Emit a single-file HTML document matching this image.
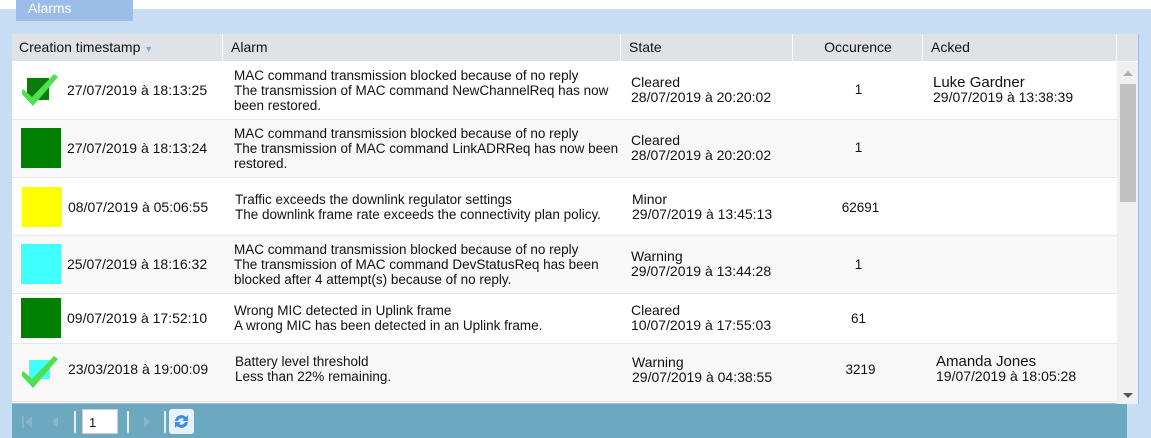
<!DOCTYPE html>
<html><head><meta charset="utf-8"><style>
*{margin:0;padding:0;box-sizing:border-box}
body{width:1151px;height:438px;overflow:hidden;background:#fff;font-family:"Liberation Sans",Tahoma,sans-serif;font-size:13.5px;color:#111;position:relative}
.a{position:absolute}
.panel{left:0;top:9px;width:1151px;height:429px;background:#c6ddf3}
.tab{left:16px;top:0;width:117px;height:21px;background:#9cbde8;color:#fff;font-size:14px;padding:0 0 0 12px;line-height:17px}
.table{left:12px;top:34px;width:1127px;height:370px;background:#fff;border-right:1px solid #9cbde8;border-bottom:1px solid #9cbde8}
.hdr{left:12px;top:34px;width:1126px;height:27px;background:#dfe3e8}
.hc{top:34px;height:27px;line-height:26px;border-left:1px solid #fff;padding-left:8px;font-size:14px}
.row{left:12px;width:1105px;border-bottom:1px solid #e8e8e8}
.t{line-height:13px}
.ts{font-size:14px}
.sq{width:40px;height:40px}
.sb{left:1117px;top:62px;width:21px;height:342px;background:#f0f0f0}
.tool{left:12px;top:404px;width:1115px;height:34px;background:#6da8c1}
</style></head><body>
<div class="a panel"></div>
<div class="a tab">Alarms</div>
<div class="a table"></div>
<div class="a hdr"></div>
<div class="a hc" style="left:12px;border-left:0;padding-left:7px">Creation timestamp <span style="color:#7fa6d6;font-size:9px">&#9660;</span></div>
<div class="a hc" style="left:222px">Alarm</div>
<div class="a hc" style="left:620px">State</div>
<div class="a hc" style="left:792px;width:131px;text-align:center;padding:0">Occurence</div>
<div class="a hc" style="left:922px">Acked</div>
<div class="a hc" style="left:1116px;height:27px"></div>

<div class="a row" style="top:62px;height:58px;background:#fff"></div>
<div class="a row" style="top:120px;height:58px;background:#f8f8f8"></div>
<div class="a row" style="top:178px;height:58px;background:#fff"></div>
<div class="a row" style="top:236px;height:58px;background:#f8f8f8"></div>
<div class="a row" style="top:294px;height:50px;background:#fff"></div>
<div class="a row" style="top:344px;height:58px;background:#f8f8f8"></div>

<!-- row1 -->
<svg class="a" style="left:22px;top:72px" width="40" height="36" viewBox="0 0 40 36"><rect x="5" y="6" width="22" height="22" fill="#0b7d0b"/><path d="M1 17 L10 25 L32 2 L36 5 L11 34 L-1 21 Z" fill="#4fe04f"/></svg>
<div class="a t ts" style="left:67px;top:84px">27/07/2019 à 18:13:25</div>
<div class="a t" style="left:234px;top:68px;line-height:15px">MAC command transmission blocked because of no reply<br>The transmission of MAC command NewChannelReq has now<br>been restored.</div>
<div class="a t ts" style="left:631px;top:75px;line-height:15px">Cleared<br>28/07/2019 à 20:20:02</div>
<div class="a t" style="left:793px;width:131px;text-align:center;top:83px">1</div>
<div class="a t ts" style="left:933px;top:75px;line-height:15px"><span style="font-size:15px">Luke Gardner</span><br>29/07/2019 à 13:38:39</div>
<!-- row2 -->
<div class="a sq" style="left:21px;top:128px;background:#008000"></div>
<div class="a t ts" style="left:67px;top:142px">27/07/2019 à 18:13:24</div>
<div class="a t" style="left:234px;top:126px;line-height:15px">MAC command transmission blocked because of no reply<br>The transmission of MAC command LinkADRReq has now been<br>restored.</div>
<div class="a t ts" style="left:631px;top:133px;line-height:15px">Cleared<br>28/07/2019 à 20:20:02</div>
<div class="a t" style="left:793px;width:131px;text-align:center;top:141px">1</div>
<!-- row3 -->
<div class="a sq" style="left:22px;top:187px;background:#ffff00"></div>
<div class="a t ts" style="left:68px;top:201px">08/07/2019 à 05:06:55</div>
<div class="a t" style="left:235px;top:192px;line-height:15px">Traffic exceeds the downlink regulator settings<br>The downlink frame rate exceeds the connectivity plan policy.</div>
<div class="a t ts" style="left:632px;top:192px;line-height:15px">Minor<br>29/07/2019 à 13:45:13</div>
<div class="a t" style="left:795px;width:131px;text-align:center;top:201px">62691</div>
<!-- row4 -->
<div class="a sq" style="left:21px;top:244px;background:#3fffff"></div>
<div class="a t ts" style="left:67px;top:258px">25/07/2019 à 18:16:32</div>
<div class="a t" style="left:234px;top:242px;line-height:15px">MAC command transmission blocked because of no reply<br>The transmission of MAC command DevStatusReq has been<br>blocked after 4 attempt(s) because of no reply.</div>
<div class="a t ts" style="left:631px;top:249px;line-height:15px">Warning<br>29/07/2019 à 13:44:28</div>
<div class="a t" style="left:793px;width:131px;text-align:center;top:258px">1</div>
<!-- row5 -->
<div class="a sq" style="left:21px;top:298px;background:#008000"></div>
<div class="a t ts" style="left:67px;top:312px">09/07/2019 à 17:52:10</div>
<div class="a t" style="left:234px;top:303px;line-height:15px">Wrong MIC detected in Uplink frame<br>A wrong MIC has been detected in an Uplink frame.</div>
<div class="a t ts" style="left:631px;top:303px;line-height:15px">Cleared<br>10/07/2019 à 17:55:03</div>
<div class="a t" style="left:793px;width:131px;text-align:center;top:312px">61</div>
<!-- row6 -->
<svg class="a" style="left:22px;top:354px" width="40" height="36" viewBox="0 0 40 36"><rect x="7" y="6" width="21" height="19" fill="#3fffff"/><path d="M1 17 L10 25 L32 2 L36 5 L11 34 L-1 21 Z" fill="#4fe04f"/></svg>
<div class="a t ts" style="left:68px;top:363px">23/03/2018 à 19:00:09</div>
<div class="a t" style="left:235px;top:354px;line-height:15px">Battery level threshold<br>Less than 22% remaining.</div>
<div class="a t ts" style="left:632px;top:355px;line-height:15px">Warning<br>29/07/2019 à 04:38:55</div>
<div class="a t" style="left:795px;width:131px;text-align:center;top:363px">3219</div>
<div class="a t ts" style="left:936px;top:354px;line-height:15px"><span style="font-size:15px">Amanda Jones</span><br>19/07/2019 à 18:05:28</div>

<!-- scrollbar -->
<div class="a sb"></div>
<div class="a" style="left:1120px;top:84px;width:16px;height:118px;background:#c1c1c1"></div>
<div class="a" style="left:1123px;top:71px;width:0;height:0;border-left:5px solid transparent;border-right:5px solid transparent;border-bottom:5px solid #aaa"></div>
<div class="a" style="left:1123px;top:393px;width:0;height:0;border-left:5px solid transparent;border-right:5px solid transparent;border-top:5px solid #555"></div>

<!-- toolbar -->
<div class="a tool"></div>
<div class="a" style="left:22px;top:416px;width:2px;height:12px;background:#88b5c8"></div>
<div class="a" style="left:25px;top:416px;width:0;height:0;border-top:6px solid transparent;border-bottom:6px solid transparent;border-right:7px solid #88b5c8"></div>
<div class="a" style="left:52px;top:416px;width:0;height:0;border-top:6px solid transparent;border-bottom:6px solid transparent;border-right:6px solid #88b5c8"></div>
<div class="a" style="left:74px;top:411px;width:2px;height:22px;background:#e8f0f4"></div>
<div class="a" style="left:82px;top:409px;width:36px;height:25px;background:#fff;border:1px solid #ccc;padding:5px 0 0 6px;font-size:13px">1</div>
<div class="a" style="left:127px;top:411px;width:2px;height:22px;background:#e8f0f4"></div>
<div class="a" style="left:144px;top:416px;width:0;height:0;border-top:6px solid transparent;border-bottom:6px solid transparent;border-left:6px solid #88b5c8"></div>
<div class="a" style="left:164px;top:411px;width:2px;height:22px;background:#e8f0f4"></div>
<div class="a" style="left:169px;top:409px;width:25px;height:25px;background:#e8f2fb;border-radius:3px"></div>
<svg class="a" style="left:171px;top:411px" width="21" height="21" viewBox="0 0 21 21"><path d="M4 10 A6.5 6.5 0 0 1 15 6 L17 4 L17 10 L11 10 L13 8 A4 4 0 0 0 7 10 Z" fill="#3a8ee6"/><path d="M17 11 A6.5 6.5 0 0 1 6 15 L4 17 L4 11 L10 11 L8 13 A4 4 0 0 0 14 11 Z" fill="#3a8ee6"/></svg>
</body></html>
